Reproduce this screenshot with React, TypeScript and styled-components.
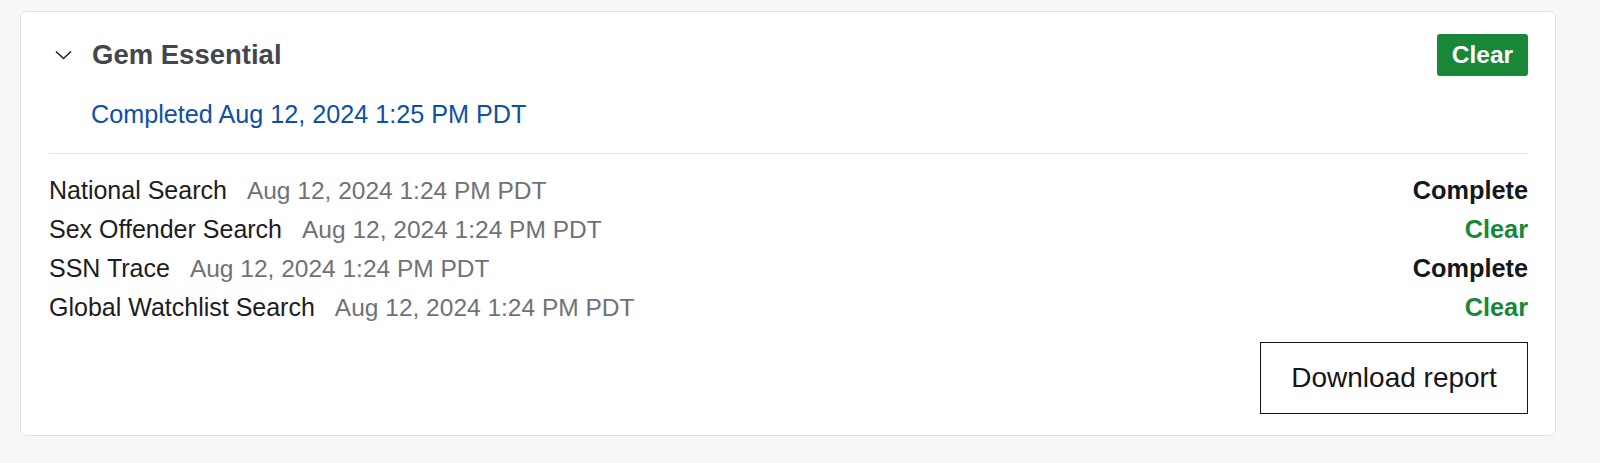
import styled, { createGlobalStyle } from "styled-components";

const GlobalStyle = createGlobalStyle`
  body {
    margin: 0;
    background: #f6f7f9;
    font-family: "Liberation Sans", Arial, sans-serif;
  }
`;

const checks = [
  { name: "National Search", date: "Aug 12, 2024 1:24 PM PDT", status: "Complete" },
  { name: "Sex Offender Search", date: "Aug 12, 2024 1:24 PM PDT", status: "Clear" },
  { name: "SSN Trace", date: "Aug 12, 2024 1:24 PM PDT", status: "Complete" },
  { name: "Global Watchlist Search", date: "Aug 12, 2024 1:24 PM PDT", status: "Clear" },
];

const Page = styled.div`
  padding: 11px 44px 27px 20px;
`;

const Card = styled.section`
  background: #fff;
  border: 1px solid #dfe3e8;
  border-radius: 6px;
  padding: 22px 27px 21px 28px;
`;

const Header = styled.div`
  display: flex;
  align-items: center;
  justify-content: space-between;
  height: 42px;
`;

const TitleGroup = styled.div`
  display: flex;
  align-items: center;
`;

const Chevron = styled.svg`
  margin-left: 6px;
  margin-right: 20px;
  flex-shrink: 0;
`;

const Title = styled.h2`
  margin: 0;
  font-size: 27.5px;
  font-weight: 700;
  color: #43474c;
`;

const Badge = styled.span`
  display: inline-flex;
  align-items: center;
  justify-content: center;
  width: 91px;
  height: 42px;
  border-radius: 3px;
  background: #1a8738;
  color: #fff;
  font-size: 24.5px;
  font-weight: 700;
`;

const Completed = styled.div`
  margin: 23px 0 0 42px;
  line-height: 30px;
  font-size: 25.2px;
  color: #0f4fa6;
`;

const Divider = styled.hr`
  margin: 24px 0 17px;
  border: 0;
  border-top: 1px solid #e3e6ea;
`;

const Row = styled.div`
  display: flex;
  align-items: baseline;
  line-height: 39px;
  font-size: 24.5px;
`;

const Name = styled.span`
  font-size: 25px;
  color: #1b1d20;
`;

const When = styled.span`
  margin-left: 20px;
  color: #6e7277;
`;

const Status = styled.span<{ clear: boolean }>`
  margin-left: auto;
  font-size: 25.3px;
  font-weight: 700;
  color: ${(p) => (p.clear ? "#1a8738" : "#14181c")};
`;

const Footer = styled.div`
  display: flex;
  justify-content: flex-end;
  margin-top: 15px;
`;

const DownloadButton = styled.button`
  width: 268px;
  height: 72px;
  border: 1px solid #161616;
  border-radius: 0;
  background: #fff;
  color: #161616;
  font-family: inherit;
  font-size: 28px;
  cursor: pointer;
`;

export default function App() {
  return (
    <Page>
      <GlobalStyle />
      <Card>
        <Header>
          <TitleGroup>
            <Chevron width="17" height="10" viewBox="0 0 17 10">
              <polyline points="1,1.5 8.5,8.5 16,1.5" fill="none" stroke="#222" strokeWidth="1.6" />
            </Chevron>
            <Title>Gem Essential</Title>
          </TitleGroup>
          <Badge>Clear</Badge>
        </Header>
        <Completed>Completed Aug 12, 2024 1:25 PM PDT</Completed>
        <Divider />
        {checks.map((c) => (
          <Row key={c.name}>
            <Name>{c.name}</Name>
            <When>{c.date}</When>
            <Status clear={c.status === "Clear"}>{c.status}</Status>
          </Row>
        ))}
        <Footer>
          <DownloadButton>Download report</DownloadButton>
        </Footer>
      </Card>
    </Page>
  );
}
